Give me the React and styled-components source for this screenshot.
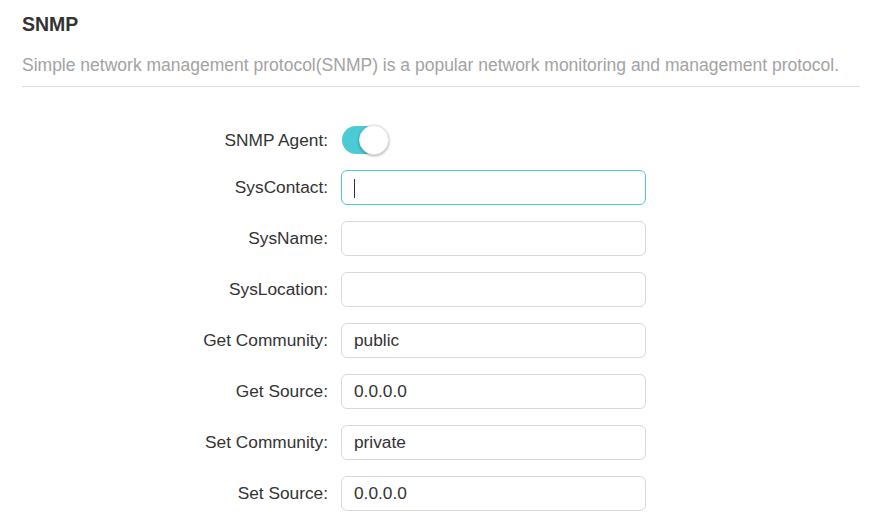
import React from "react";
import styled, { createGlobalStyle } from "styled-components";

const Global = createGlobalStyle`
  html, body { margin: 0; padding: 0; background: #fff; }
  body { font-family: "Liberation Sans", Arial, sans-serif; color: #333; }
`;

const Page = styled.div`
  padding: 13px 24px 0 22px;
`;

const Title = styled.h2`
  margin: 0;
  font-size: 19.5px;
  font-weight: bold;
  color: #333;
  line-height: 23px;
`;

const Desc = styled.p`
  margin: 19px 0 0;
  font-size: 17.5px;
  line-height: 20px;
  color: #a3a3a3;
  padding-bottom: 11px;
  border-bottom: 1px solid #dcdcdc;
`;

const Form = styled.div`
  display: grid;
  grid-template-columns: 306px 305px;
  column-gap: 13px;
  row-gap: 16px;
  align-items: center;
  margin-top: 39px;
`;

const Label = styled.label`
  text-align: right;
  font-size: 17.3px;
  color: #333;
`;

const Toggle = styled.div`
  position: relative;
  width: 46px;
  height: 28px;
  border-radius: 14px;
  background: #4acbd6;
  margin-left: 1px;
`;

const Knob = styled.span`
  position: absolute;
  right: -1px;
  top: -1px;
  width: 30px;
  height: 30px;
  border-radius: 50%;
  background: #fff;
  box-shadow: 0 1px 3px rgba(0, 0, 0, 0.35);
  box-sizing: border-box;
  border: 1px solid #e6e6e6;
`;

const Input = styled.input`
  box-sizing: border-box;
  width: 305px;
  height: 35px;
  border: 1px solid ${(p) => (p.$focused ? "#4acbd6" : "#d9d9d9")};
  border-radius: 6px;
  padding: 0 12px;
  font-family: "Liberation Sans", Arial, sans-serif;
  font-size: 17.3px;
  color: #333;
  outline: none;
  background: #fff;
`;

const Caret = styled.div`
  box-sizing: border-box;
  width: 305px;
  height: 35px;
  border: 1px solid #4acbd6;
  border-radius: 6px;
  padding: 8px 0 0 12px;
  &::after {
    content: "";
    display: block;
    width: 1px;
    height: 19px;
    background: #333;
  }
`;

const fields = [
  ["SysName:", ""],
  ["SysLocation:", ""],
  ["Get Community:", "public"],
  ["Get Source:", "0.0.0.0"],
  ["Set Community:", "private"],
  ["Set Source:", "0.0.0.0"],
];

export default function App() {
  return (
    <>
      <Global />
      <Page>
        <Title>SNMP</Title>
        <Desc>
          Simple network management protocol(SNMP) is a popular network
          monitoring and management protocol.
        </Desc>
        <Form>
          <Label>SNMP Agent:</Label>
          <Toggle>
            <Knob />
          </Toggle>
          <Label>SysContact:</Label>
          <Caret />
          {fields.map(([l, v]) => (
            <React.Fragment key={l}>
              <Label>{l}</Label>
              <Input defaultValue={v} readOnly />
            </React.Fragment>
          ))}
        </Form>
      </Page>
    </>
  );
}
